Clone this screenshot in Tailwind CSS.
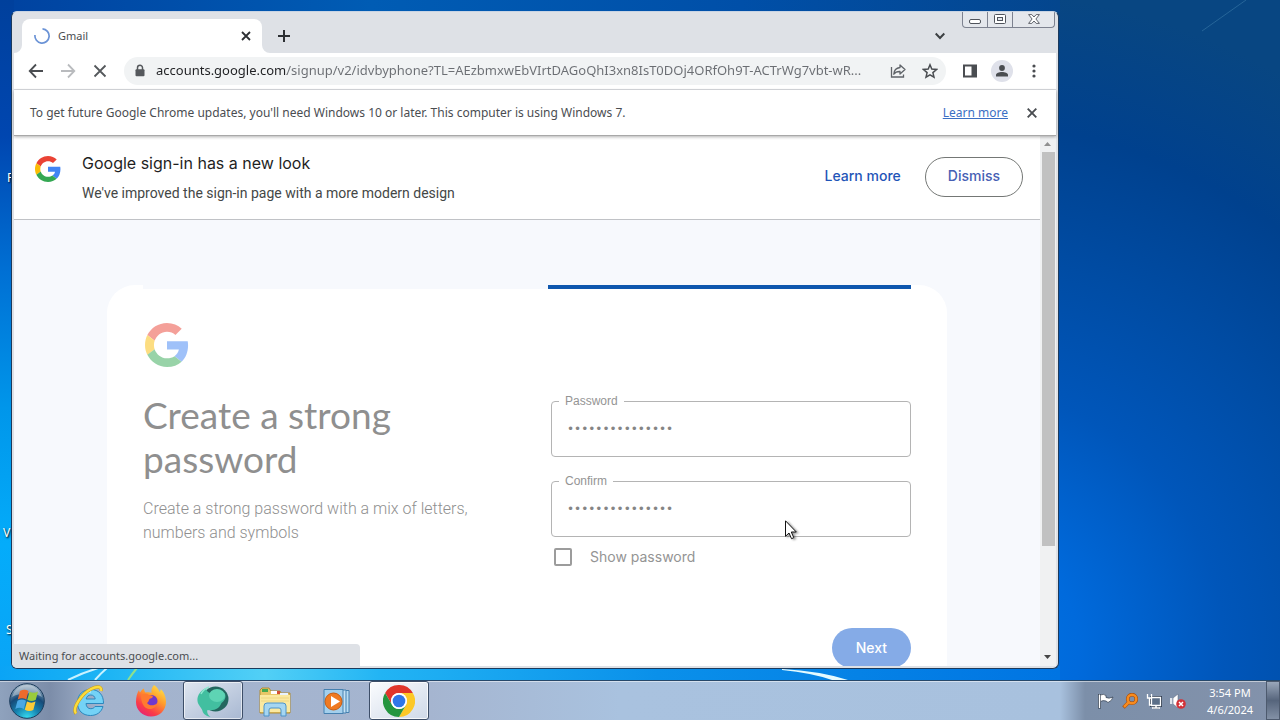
<!DOCTYPE html>
<html lang="en">
<head>
  <meta charset="UTF-8" />
  <meta name="viewport" content="width=device-width, initial-scale=1.0" />
  <title>Gmail</title>
  <script src="https://cdn.jsdelivr.net/npm/@tailwindcss/browser@4"></script>
</head>
<body class="h-screen overflow-hidden flex flex-col bg-[#0058b8] font-['Noto_Sans',sans-serif] text-xs text-[#4a4d51]">

  <!-- Desktop -->
  <div class="relative flex-1 overflow-hidden">
    <svg class="absolute inset-0 w-full h-full" viewBox="0 0 1280 680" preserveAspectRatio="none" aria-hidden="true">
      <defs>
        <linearGradient id="left" x1="0" y1="0" x2="0" y2="1">
          <stop offset="0" stop-color="#00409c" />
          <stop offset=".2" stop-color="#0046b0" />
          <stop offset=".4" stop-color="#0070d4" />
          <stop offset=".6" stop-color="#0096ea" />
          <stop offset=".8" stop-color="#04acfa" />
          <stop offset="1" stop-color="#0aa4f6" />
        </linearGradient>
        <linearGradient id="top" x1="0" y1="0" x2="1" y2="0">
          <stop offset="0" stop-color="#0042a0" />
          <stop offset=".35" stop-color="#005cb4" />
          <stop offset=".7" stop-color="#004fa8" />
          <stop offset="1" stop-color="#04468e" />
        </linearGradient>
        <radialGradient id="right" gradientUnits="userSpaceOnUse" cx="960" cy="650" r="660">
          <stop offset="0" stop-color="#0076e4" />
          <stop offset=".18" stop-color="#006adc" />
          <stop offset=".4" stop-color="#0056ba" />
          <stop offset=".6" stop-color="#004ca4" />
          <stop offset=".8" stop-color="#00418e" />
          <stop offset="1" stop-color="#084682" />
        </radialGradient>
        <linearGradient id="bottom" x1="0" y1="0" x2="1" y2="0">
          <stop offset="0" stop-color="#0aa4f6" />
          <stop offset=".1" stop-color="#1cb4f4" />
          <stop offset=".25" stop-color="#52d0f6" />
          <stop offset=".36" stop-color="#22b4f4" />
          <stop offset=".62" stop-color="#0a90ea" />
          <stop offset="1" stop-color="#0074e2" />
        </linearGradient>
      </defs>
      <rect width="1280" height="680" fill="url(#right)" />
      <rect width="1060" height="12" fill="url(#top)" />
      <rect width="14" height="680" fill="url(#left)" />
      <rect y="666" width="1060" height="14" fill="url(#bottom)" />
      <path d="M68 680q14-7 30-12M95 680q5-6 12-12" stroke="#c8f2ff" stroke-width="2" fill="none" />
      <path d="M128 680q4-6 9-12" stroke="#8fe08c" stroke-width="2" fill="none" />
      <path d="M782 669q38 2 66 11h-16q-20-7-50-10z" fill="#e4fbff" />
      <path d="M1202 31l44-31" stroke="#3a7aa8" stroke-width="1" opacity=".6" />
    </svg>
    <span class="absolute left-[7px] top-[170px] text-white [text-shadow:1px_1px_2px_black]">F</span>
    <span class="absolute left-[3px] top-[525px] text-white [text-shadow:1px_1px_2px_black]">V</span>
    <span class="absolute left-[6px] top-[622px] text-white [text-shadow:1px_1px_2px_black]">S</span>

    <!-- Browser window -->
    <div class="absolute left-[11px] top-[11px] w-[1048px] h-[658px] flex flex-col rounded-md border border-t-[#c8d4e4] border-x-[#1c3a5c] border-b-[#1c3a5c] bg-[#dee1e6] px-[2px] pb-[2px] overflow-hidden">

      <!-- Tab strip -->
      <div class="relative flex h-[41px] shrink-0 items-end pl-2">
        <div class="relative flex h-[34px] w-[240px] items-center rounded-t-lg bg-white pl-3 pr-2">
          <svg class="absolute -left-2 bottom-0 size-2" viewBox="0 0 8 8"><path d="M8 0v8H0a8 8 0 0 0 8-8z" fill="#fff" /></svg>
          <svg class="absolute -right-2 bottom-0 size-2" viewBox="0 0 8 8"><path d="M0 0v8h8a8 8 0 0 1-8-8z" fill="#fff" /></svg>
          <svg class="size-4" viewBox="0 0 16 16" fill="none"><path d="M8.500 .9A7.100 7.100 0 1 1 1 7" stroke="#6b93d6" stroke-width="1.700" /></svg>
          <span class="ml-2 flex-1 text-[11px]">Gmail</span>
          <button aria-label="Close tab" class="flex size-4 items-center justify-center">
            <svg class="size-[10px]" viewBox="0 0 10 10"><path d="M1 1l8 8M9 1l-8 8" stroke="#2c2f33" stroke-width="1.800" /></svg>
          </button>
        </div>
        <button aria-label="New tab" class="ml-[14px] mb-[9px] flex size-4 items-center justify-center">
          <svg class="size-3" viewBox="0 0 12 12"><path d="M6 0v12M0 6h12" stroke="#2c2f33" stroke-width="2" /></svg>
        </button>
        <button aria-label="Search tabs" class="ml-auto mr-[108px] mb-[9px] flex size-4 items-center justify-center">
          <svg class="size-[10px]" viewBox="0 0 10 10" fill="none"><path d="M.700 2.500L5 7l4.300-4.500" stroke="#3c4043" stroke-width="2" /></svg>
        </button>
        <div class="absolute right-[1px] -top-px flex h-[17px] w-[93px] divide-x divide-[#7d8290] rounded-b border border-t-0 border-[#7d8290] bg-[#e4e7ec]">
          <button aria-label="Minimize" class="flex w-[25px] items-center justify-center pt-1">
            <svg class="h-[5px] w-3" viewBox="0 0 12 5"><rect x=".5" y=".5" width="11" height="4" rx="1.500" fill="#fff" stroke="#50545c" /></svg>
          </button>
          <button aria-label="Maximize" class="flex w-[25px] items-center justify-center">
            <svg class="h-[10px] w-3" viewBox="0 0 12 10"><rect x=".5" y=".5" width="11" height="9" rx="1" fill="#fff" stroke="#50545c" /><rect x="3.500" y="3.500" width="5" height="3" fill="#e4e7ec" stroke="#50545c" /></svg>
          </button>
          <button aria-label="Close" class="flex flex-1 items-center justify-center">
            <svg class="h-[10px] w-3" viewBox="0 0 12 10"><path d="M.6.6h3.200L6 3 8.200.6h3.200L7.900 5l3.500 4.400H8.200L6 7 3.800 9.400H.6L4.100 5z" fill="#fff" stroke="#50545c" stroke-width=".9" /></svg>
          </button>
        </div>
      </div>

      <!-- Toolbar -->
      <div class="flex h-[37px] shrink-0 items-center border-b border-[#dadce0] bg-white pl-[14px] pr-[14px]">
        <button aria-label="Back" class="size-4">
          <svg class="size-4" viewBox="0 0 16 16" fill="none" stroke="#4a4d51" stroke-width="1.800"><path d="M15 8H2M8 1.500L1.700 8 8 14.500" /></svg>
        </button>
        <button aria-label="Forward" class="ml-4 size-4">
          <svg class="size-4" viewBox="0 0 16 16" fill="none" stroke="#b9bbbe" stroke-width="1.800"><path d="M1 8h13M8 1.500L14.300 8 8 14.500" /></svg>
        </button>
        <button aria-label="Stop" class="ml-4 size-4">
          <svg class="size-4" viewBox="0 0 16 16" fill="none" stroke="#55585c" stroke-width="1.800"><path d="M2.500 2.500l11 11M13.500 2.500l-11 11" /></svg>
        </button>
        <div class="ml-4 flex h-7 flex-1 items-center rounded-full bg-[#f1f3f4] pl-2 pr-2">
          <svg class="size-4" viewBox="0 0 16 16"><path d="M5.500 7V4.700a2.500 2.500 0 0 1 5 0V7" fill="none" stroke="#55585c" stroke-width="1.500" /><rect x="3.500" y="6.300" width="9" height="7" rx="1" fill="#55585c" /></svg>
          <input type="text" aria-label="Address and search bar" class="ml-2 min-w-0 flex-1 bg-[linear-gradient(to_right,#202124_131px,#6b6e73_131px)] bg-clip-text text-[13px] text-transparent outline-none" value="accounts.google.com/signup/v2/idvbyphone?TL=AEzbmxwEbVIrtDAGoQhI3xn8IsT0DOj4ORfOh9T-ACTrWg7vbt-wR..." />
          <button aria-label="Share this page" class="ml-3 size-4">
            <svg class="size-4" viewBox="0 0 16 16" fill="none" stroke="#5f6368" stroke-width="1.300"><path d="M1.500 4v10h12v-2.500" /><path d="M10 2l5 4.500L10 11V8.500C7 8.400 5.200 9.200 3.800 11.200 4 7.500 6 5 10 4.500z" stroke-linejoin="round" /></svg>
          </button>
          <button aria-label="Bookmark this tab" class="ml-4 size-4">
            <svg class="size-4" viewBox="0 0 16 16" fill="none" stroke="#4a4d51" stroke-width="1.500"><path d="M8 1.800l1.800 4.300 4.700.4-3.600 3.100 1.100 4.600L8 11.800l-4 2.400 1.100-4.600L1.500 6.500l4.700-.4z" /></svg>
          </button>
        </div>
        <button aria-label="Side panel" class="ml-4 size-4">
          <svg class="size-4" viewBox="0 0 16 16"><path d="M1 1.500h14v13H1z" fill="#4a4d51" /><path d="M3 3.500h6.500v9H3z" fill="#fff" /></svg>
        </button>
        <button aria-label="Profile" class="ml-[13px] flex size-[22px] items-center justify-center rounded-full bg-[#dfe1ea]">
          <svg class="size-3" viewBox="0 0 12 12" fill="#4a4d51"><circle cx="6" cy="3" r="2.900" /><path d="M0 11.500V10c0-2 3-3 6-3s6 1 6 3v1.500z" /></svg>
        </button>
        <button aria-label="Menu" class="ml-[13px] size-4">
          <svg class="size-4" viewBox="0 0 16 16" fill="#4a4d51"><circle cx="8" cy="3" r="1.600" /><circle cx="8" cy="8" r="1.600" /><circle cx="8" cy="13" r="1.600" /></svg>
        </button>
      </div>

      <!-- Infobar -->
      <div class="relative z-10 flex h-[46px] shrink-0 items-center border-b border-[#a8a8a8] bg-white pl-4 pr-[19px] shadow-[0_1px_3px_rgba(0,0,0,.3)]">
        <p class="flex-1">To get future Google Chrome updates, you'll need Windows 10 or later. This computer is using Windows 7.</p>
        <a href="#" class="text-[#3b6fc4] underline">Learn more</a>
        <button aria-label="Close" class="ml-[19px]">
          <svg class="size-[10px]" viewBox="0 0 10 10"><path d="M.700.700l8.600 8.600M9.300.700L.700 9.300" stroke="#4a4d51" stroke-width="1.900" /></svg>
        </button>
      </div>

      <!-- Page and scrollbar -->
      <div class="flex min-h-0 flex-1 bg-[#f7f9fd]">
        <main class="min-w-0 flex-1 overflow-hidden font-[Roboto,sans-serif]">
          <section class="flex h-[84px] items-center border-b border-[#c0c2c6] bg-white pl-[21px] pr-[17px] pb-[2px]">
            <svg class="mb-4 size-[26px]" viewBox="0 0 48 48"><use href="#google-g" /></svg>
            <div class="ml-[21px] flex-1">
              <h2 class="font-[Inter,sans-serif] text-[16px] leading-6 text-[#1f1f1f]">Google sign-in has a new look</h2>
              <p class="mt-2 text-[14px] leading-5 text-[#444746]">We've improved the sign-in page with a more modern design</p>
            </div>
            <a href="#" class="font-[Inter,sans-serif] text-[14px] font-medium text-[#1f55b8]">Learn more</a>
            <button class="ml-6 h-10 rounded-full border border-[#747775] px-[22px] font-[Inter,sans-serif] text-[14px] font-medium text-[#4660b4]">Dismiss</button>
          </section>

          <form class="relative mt-[65px] mx-[93px] rounded-t-[28px] bg-white px-9 pt-9">
            <div class="absolute inset-x-9 top-0 flex h-1 bg-[#f7f9fd]">
              <div class="ml-auto h-1 w-[363px] bg-[#0f57ae]"></div>
            </div>
            <div class="p-[2px] opacity-50">
              <svg class="size-11" viewBox="0 0 48 48"><use href="#google-g" /></svg>
            </div>
            <div class="mt-6 flex">
              <div class="flex-1 text-[#8f8f8f]">
                <h1 class="w-[300px] font-[Lato,sans-serif] text-[37px] leading-[44px]">Create a strong password</h1>
                <p class="mt-4 w-[350px] text-[16px] font-light leading-6">Create a strong password with a mix of letters, numbers and symbols</p>
              </div>
              <div class="w-[360px] pt-2 text-[#949494]">
                <div class="relative">
                  <label for="password" class="absolute left-2 -top-2 bg-white px-[6px] font-['Liberation_Sans',sans-serif] text-[12px] leading-4">Password</label>
                  <input id="password" type="password" value="abcdefghijklmno" class="block h-14 w-full rounded border border-[#b4b4b4] bg-white px-[15px] font-['DejaVu_Sans',sans-serif] text-[12px] text-[#858585] outline-none" />
                </div>
                <div class="relative mt-6">
                  <label for="confirm" class="absolute left-2 -top-2 bg-white px-[6px] font-['Liberation_Sans',sans-serif] text-[12px] leading-4">Confirm</label>
                  <input id="confirm" type="password" value="abcdefghijklmno" class="block h-14 w-full rounded border border-[#b4b4b4] bg-white px-[15px] font-['DejaVu_Sans',sans-serif] text-[12px] text-[#858585] outline-none" />
                </div>
                <div class="mt-[10px] flex items-center pl-[3px]">
                  <input id="show" type="checkbox" class="size-[18px] appearance-none rounded-[2px] border-2 border-[#9c9c9c]" />
                  <label for="show" class="ml-[18px] font-[Inter,sans-serif] text-[14px] leading-5">Show password</label>
                </div>
              </div>
            </div>
            <div class="mt-[61px] flex justify-end pb-9">
              <button type="button" class="h-10 rounded-full bg-[#85abe7] px-6 font-[Inter,sans-serif] text-[14px] font-medium text-white">Next</button>
            </div>
          </form>
        </main>

        <div class="flex w-4 flex-col items-center bg-[#f0f1f2]">
          <svg class="h-4 w-4 shrink-0" viewBox="0 0 16 16"><path d="M4 10l3.500-4 3.500 4z" fill="#909090" /></svg>
          <div class="h-[394px] w-[13px] bg-[#c1c1c1]"></div>
          <svg class="mt-auto h-4 w-4 shrink-0" viewBox="0 0 16 16"><path d="M4 5l3.500 4L11 5z" fill="#454545" /></svg>
        </div>
      </div>

      <div class="absolute left-0 bottom-0 z-10 flex h-6 w-[348px] items-center rounded-tr bg-[#dee1e6] pl-[7px] text-[11px]">Waiting for accounts.google.com...</div>
    </div>

    <!-- Mouse pointer -->
    <svg class="absolute left-[785px] top-[520px] h-5 w-3 drop-shadow-[2px_1px_1px_rgba(0,0,0,.4)]" viewBox="0 0 12 20"><path d="M.5.800v15.500L4 13l2.500 5.700 2.300-1L6.300 12h5z" fill="#fff" stroke="#111" /></svg>
  </div>

  <!-- Taskbar -->
  <footer class="flex h-10 shrink-0 items-stretch border-t border-[#26486a] bg-[linear-gradient(to_right,#8fa2bd_0px,#7c8da9_50px,#a3b3cd_100px,#a5b5d0_430px,#a9c2df_620px,#a8c1de_1060px,#7c8fa9_1085px,#8392ab_1280px)] shadow-[inset_0_1px_0_rgba(255,255,255,.5)]">
    <button aria-label="Start" class="flex w-[54px] items-center justify-center">
      <svg class="size-9" viewBox="0 0 36 36">
        <defs>
          <radialGradient id="orb" cx=".5" cy="1" r="1">
            <stop offset="0" stop-color="#38e0f4" />
            <stop offset=".35" stop-color="#1784b0" />
            <stop offset=".65" stop-color="#164a78" />
            <stop offset="1" stop-color="#a9bccb" />
          </radialGradient>
        </defs>
        <circle cx="18" cy="18" r="17.300" fill="url(#orb)" stroke="#1b3c5c" />
        <path d="M3 14C6 5 12 2 18 2s12 3 15 12c-9-5-21-5-30 0z" fill="#fff" opacity=".35" />
        <path d="M11 8q4.500-2.500 8.500 0l-2.200 8.500q-4.300-2.400-8.500 0z" fill="#ec6a2c" />
        <path d="M20.500 8.800q4.300 2.200 8.500-.3l-2.200 8.300q-4.300 2.400-8.500 0z" fill="#9acb3c" />
        <path d="M8.500 17.700q4.300-2.400 8.500 0l-2.200 8.300q-4.300-2.500-8.500 0z" fill="#4aa8e4" />
        <path d="M18 18.600q4.300 2.300 8.500 0l-2.200 8.400q-4.300 2.300-8.500-.2z" fill="#fccb38" />
      </svg>
    </button>
    <div class="ml-[5px] flex gap-[2px]">
      <button aria-label="Internet Explorer" class="flex w-[60px] items-center justify-center">
        <svg class="size-8" viewBox="0 0 32 32" fill="none">
          <path d="M30.500 18.500H13c.3 3.500 2 5.200 4.800 5.200 2 0 3.300-.8 4.200-2.200h8C28.500 27 24 30.500 17.500 30.500 9.500 30.500 4.500 25.500 4.500 17.500S10 4.500 17.700 4.500c8 0 13 5.300 12.800 14zM13.200 14h9c-.4-2.600-2-4-4.400-4s-4.100 1.400-4.600 4z" fill="#74d2f6" stroke="#2c87bd" />
          <path d="M8 13c2-4 6-6.500 10-6.500" stroke="#c6f1ff" stroke-width="2" />
          <path d="M3 28.500C-1 24 8 9 18 4c6-3 11-3 10 2" stroke="#c79b18" stroke-width="3.400" />
          <path d="M3 28.500C-1 24 8 9 18 4c6-3 11-3 10 2" stroke="#fbdc3c" stroke-width="2.400" />
        </svg>
      </button>
      <button aria-label="Firefox" class="flex w-[60px] items-center justify-center">
        <svg class="size-8" viewBox="0 0 32 32">
          <defs>
            <linearGradient id="fox" x1=".85" y1="0" x2=".2" y2="1">
              <stop offset="0" stop-color="#ffe84a" />
              <stop offset=".4" stop-color="#ff9a2c" />
              <stop offset=".75" stop-color="#fb3b48" />
              <stop offset="1" stop-color="#e2207c" />
            </linearGradient>
          </defs>
          <path d="M19 0c3 2 4.500 4 5.500 7 1-1 1.200-2 1.200-3C29 7 31 12 31 17c0 8.500-6.500 14.500-15 14.500S1 25 1 17c0-5 1-9 3-12 .2 1.200.6 2 1 2.500C6 6 7 4.500 9 3.500c0 1.500.5 3 1.500 4 3-.5 5-.3 6 .3C16 5 17 2 19 0z" fill="url(#fox)" />
          <circle cx="16.500" cy="16" r="6" fill="#7038cc" />
          <path d="M6 10c3-2 6-1.500 8 0 2 .2 3.500.6 4 1.500-.5 1.500-2.500 2-3.500 2.500-1 1-.5 3-2.500 4 2 3 7 3 10 .5 0 3-4 6-8 5.500-5-.5-8-6-8-14z" fill="#ff7a30" />
        </svg>
      </button>
      <button aria-label="Remote assistant" class="flex w-[60px] items-center justify-center rounded-[3px] border border-[#3d4e68] bg-linear-to-br from-[#dfe6f0] to-[#a8b8d2] shadow-[inset_0_0_0_1px_rgba(255,255,255,.6)]">
        <svg class="size-8" viewBox="0 0 32 32">
          <ellipse cx="18.500" cy="14" rx="13" ry="12.500" fill="#23675f" />
          <path d="M9 3C2 6-2 14 2 20c1.500 2.500 3 4 3.500 6 .6 2.500 3 5 8 6-2.500-2-4-5-3-7 8 1 12-2 14-7 4-3 5-7 3-10-3 3-8 3-12 1C12 8 9 6 9 3z" fill="#42bfa0" />
          <ellipse cx="20" cy="10.500" rx="8" ry="6.500" fill="#5ed4b4" />
          <path d="M4 9c2-4 5-6 8-7" stroke="#8fe8d0" stroke-width="1.500" fill="none" />
        </svg>
      </button>
      <button aria-label="Windows Explorer" class="flex w-[60px] items-center justify-center">
        <svg class="size-8" viewBox="0 0 32 32">
          <path d="M1 5l2-2h7l2 3h9l1 2h9v20H1z" fill="#e8c768" stroke="#b08d35" />
          <path d="M3 4h6v3H3z" fill="#47a850" /><path d="M12 6h6v3h-6z" fill="#fff" /><path d="M21 8h8v3h-8z" fill="#e9f3ff" /><path d="M18 6h3v3h-3z" fill="#d44f35" />
          <path d="M1 10h30v17H1z" fill="#fbe9a0" />
          <path d="M2 13h28M2 16h28" stroke="#efd782" />
          <path d="M5 31V21q0-3 3-3h16q3 0 3 3v10h-5v-6q0-2-2-2h-8q-2 0-2 2v6z" fill="#a5d6f2" stroke="#4d93c8" />
        </svg>
      </button>
      <button aria-label="Windows Media Player" class="flex w-[60px] items-center justify-center">
        <svg class="size-8" viewBox="0 0 32 32">
          <path d="M22 5.500h6v22h-6z" fill="#b8dcf2" stroke="#4580b0" /><path d="M20 5h5v23h-5z" fill="#c4e2f5" stroke="#4580b0" />
          <path d="M3 4.500h19v24H3z" fill="#a3cfec" stroke="#4580b0" />
          <circle cx="12.500" cy="16.500" r="8.500" fill="#ef7a22" stroke="#c65c12" />
          <path d="M10 11l9 5.500-9 5.500z" fill="#fff" />
        </svg>
      </button>
      <button aria-label="Google Chrome" class="flex w-[60px] items-center justify-center rounded-[3px] border border-[#3d4e68] bg-linear-to-br from-[#fbfcfe] to-[#cfd9e8] shadow-[inset_0_0_0_1px_rgba(255,255,255,.8)]">
        <svg class="size-8" viewBox="0 0 32 32">
          <path d="M2.140 8A16 16 0 0 1 29.860 8H16a8 8 0 0 0-6.930 12z" fill="#e0352b" />
          <path d="M29.860 8A16 16 0 0 1 16 32l6.930-12A8 8 0 0 0 16 8z" fill="#fcc827" />
          <path d="M2.140 8A16 16 0 0 0 16 32l6.930-12a8 8 0 0 1-13.860 0z" fill="#24953f" />
          <circle cx="16" cy="16" r="8" fill="#fff" />
          <circle cx="16" cy="16" r="6.300" fill="#2f76e8" />
        </svg>
      </button>
    </div>

    <div class="ml-auto flex items-center gap-2">
      <svg class="size-4" viewBox="0 0 16 16"><path d="M1.500 1v14.500" stroke="#2d3a4c" stroke-width="3" /><path d="M2.500 2q3-1.500 5.500.5v2q3 1.500 7-.5-1 4-5 5.500L8 8q-3-1-5.500.5z" fill="#fff" stroke="#2d3a4c" stroke-width=".7" /><path d="M1.500 1.500V15" stroke="#fff" stroke-width="1.500" /></svg>
      <svg class="size-4" viewBox="0 0 16 16" fill="none"><circle cx="10" cy="6" r="4.300" stroke="#a14b0c" stroke-width="3.600" /><path d="M6.500 9.500L1.500 14.500" stroke="#a14b0c" stroke-width="3.600" /><circle cx="10" cy="6" r="4.300" stroke="#f78b1e" stroke-width="2.400" /><path d="M6.500 9.500L2 14" stroke="#f78b1e" stroke-width="2.500" /></svg>
      <svg class="size-4" viewBox="0 0 16 16" fill="none"><path d="M5.500 4.500h9v8h-9zM7 15h6M10 12.500V15" stroke="#2d3a4c" stroke-width="3" /><path d="M5.500 4.500h9v8h-9z" fill="#5c6f88" stroke="#fff" stroke-width="1.300" /><path d="M6 15h8M10 12.500V15" stroke="#fff" stroke-width="1.500" /><path d="M1.500 1v4h4V1M3.500 5v7H5" stroke="#fff" stroke-width="1.300" /></svg>
      <svg class="size-4" viewBox="0 0 16 16"><path d="M0 5h2.500v6H0z" fill="#dfe5ec" /><path d="M3 5l5-4v14l-5-4z" fill="#fff" stroke="#56637a" stroke-width=".5" /><circle cx="11" cy="11" r="4.800" fill="#d23238" /><path d="M9 9l4 4M13 9l-4 4" stroke="#fff" stroke-width="1.500" /></svg>
      <time class="ml-2 w-[56px] text-center text-[11px] leading-[17px] text-white">3:54 PM<br />4/6/2024</time>
      <button aria-label="Show desktop" class="h-full w-[14px] border border-[#4d5a6e] bg-linear-to-b from-[#9aa7ba] via-[#56657c] to-[#8391a6]"></button>
    </div>
  </footer>

  <svg class="hidden">
    <symbol id="google-g" viewBox="0 0 48 48">
      <path fill="#EA4335" d="M24 9.500c3.540 0 6.710 1.220 9.210 3.600l6.850-6.850C35.900 2.380 30.470 0 24 0 14.620 0 6.510 5.380 2.560 13.220l7.980 6.190C12.430 13.720 17.740 9.500 24 9.500z" />
      <path fill="#4285F4" d="M46.980 24.550c0-1.570-.15-3.090-.38-4.550H24v9.020h12.940c-.58 2.960-2.260 5.480-4.780 7.180l7.730 6c4.510-4.180 7.090-10.360 7.090-17.650z" />
      <path fill="#FBBC05" d="M10.530 28.590c-.48-1.450-.76-2.990-.76-4.590s.27-3.140.76-4.590l-7.980-6.190C.92 16.460 0 20.120 0 24c0 3.880.92 7.540 2.560 10.780l7.970-6.190z" />
      <path fill="#34A853" d="M24 48c6.480 0 11.930-2.130 15.890-5.810l-7.730-6c-2.150 1.450-4.920 2.300-8.160 2.300-6.260 0-11.570-4.220-13.470-9.910l-7.980 6.190C6.510 42.620 14.620 48 24 48z" />
    </symbol>
  </svg>
</body>
</html>
